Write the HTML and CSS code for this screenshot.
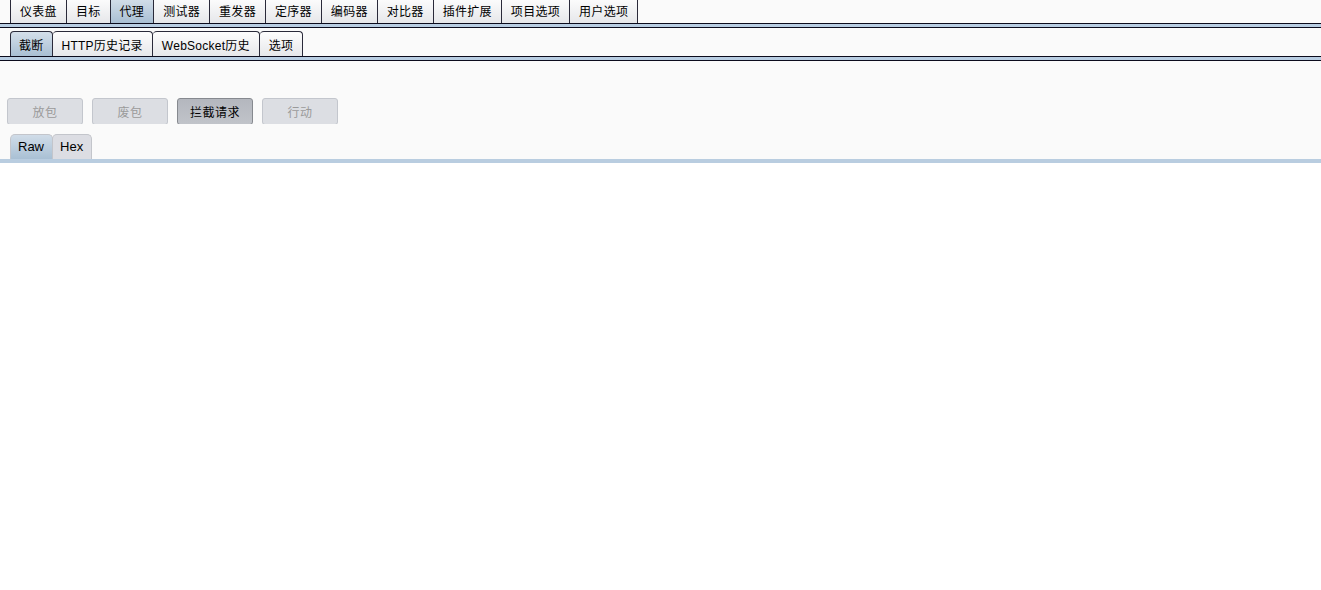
FILE: index.html
```html
<!DOCTYPE html>
<html lang="zh-CN">
<head>
<meta charset="utf-8">
<title>Proxy - Intercept</title>
<link rel="stylesheet" href="styles.css">
</head>
<body>
<div class="app">
  <div class="tabrow main-tabs">
    <div class="tab">仪表盘</div>
    <div class="tab">目标</div>
    <div class="tab active">代理</div>
    <div class="tab">测试器</div>
    <div class="tab">重发器</div>
    <div class="tab">定序器</div>
    <div class="tab">编码器</div>
    <div class="tab">对比器</div>
    <div class="tab">插件扩展</div>
    <div class="tab">项目选项</div>
    <div class="tab">用户选项</div>
  </div>
  <div class="sep"></div>
  <div class="tabrow sub-tabs">
    <div class="tab active">截断</div>
    <div class="tab">HTTP历史记录</div>
    <div class="tab">WebSocket历史</div>
    <div class="tab">选项</div>
  </div>
  <div class="sep"></div>
  <div class="intercept">
    <div class="buttons">
      <button class="btn" disabled>放包</button>
      <button class="btn" disabled>废包</button>
      <button class="btn pressed">拦截请求</button>
      <button class="btn" disabled>行动</button>
    </div>
    <div class="tabrow view-tabs">
      <div class="tab active">Raw</div>
      <div class="tab">Hex</div>
    </div>
    <div class="view-line"></div>
    <div class="editor"></div>
  </div>
</div>
</body>
</html>
```

FILE: styles.css
```css
html, body {
  margin: 0;
  padding: 0;
  height: 100%;
}
body {
  background: #ffffff;
  font-family: "Liberation Sans", "Noto Sans CJK SC", sans-serif;
  font-size: 12px;
  color: #000;
}
.app {
  display: flex;
  flex-direction: column;
  height: 100%;
}
.tabrow {
  display: flex;
  align-items: flex-end;
  background: #fafafa;
}
.main-tabs {
  height: 23px;
  padding-left: 10px;
}
.main-tabs .tab {
  height: 26px;
  margin-top: -4px;
  box-sizing: border-box;
  padding: 3px 9px 0 9px;
  display: flex;
  align-items: center;
  letter-spacing: 0.3px;
  border: 1px solid #2a2a3a;
  border-bottom: none;
  border-left: none;
  background: linear-gradient(#fdfdfd, #e6e7ea);
  line-height: 1;
}
.main-tabs .tab:first-child {
  border-left: 1px solid #2a2a3a;
}
.main-tabs .tab.active {
  background: linear-gradient(#d4dfea, #a9bfd3);
}
.sep {
  height: 3px;
  border-top: 1px solid #0b0b1c;
  border-bottom: 1px solid #0b0b1c;
  background: #b8cde2;
}
.sub-tabs {
  height: 28px;
  padding-left: 10px;
}
.sub-tabs .tab {
  height: 25px;
  box-sizing: border-box;
  padding: 0 9px;
  display: flex;
  align-items: center;
  letter-spacing: 0.25px;
  border: 1px solid #2a2a3a;
  border-bottom: none;
  border-left: none;
  border-radius: 4px 4px 0 0;
  background: linear-gradient(#fdfdfd, #e6e7ea);
}
.sub-tabs .tab:first-child {
  border-left: 1px solid #2a2a3a;
  padding: 0 8px;
}
.sub-tabs .tab.active {
  background: linear-gradient(#d4dfea, #a9bfd3);
}
.intercept {
  display: flex;
  flex-direction: column;
  flex: 1;
}
.buttons {
  background: #fafafa;
  display: flex;
  gap: 10px;
  padding: 37px 0 0 7px;
  height: 26px;
}
.btn {
  width: 76px;
  height: 27px;
  box-sizing: border-box;
  border: 1px solid #c3c6cd;
  border-radius: 3px;
  background: #dcdee3;
  color: #9a9a9a;
  font-family: "Liberation Sans", "Noto Sans CJK SC", sans-serif;
  font-size: 12px;
  letter-spacing: 0.5px;
  padding: 0;
}
.btn + .btn {
  margin-left: -1px;
}
.btn.pressed {
  background: linear-gradient(#b4b7be, #c0c3c9);
  border-color: #86898f;
  color: #000;
}
.view-tabs {
  height: 35px;
  padding-left: 10px;
}
.view-tabs .tab {
  height: 25px;
  box-sizing: border-box;
  padding: 0 8px 1px 7px;
  display: flex;
  align-items: center;
  font-size: 13px;
  border: 1px solid #c3c5cb;
  border-bottom: none;
  border-radius: 5px 5px 0 0;
  background: #dcdde3;
}
.view-tabs .tab + .tab {
  margin-left: -1px;
}
.view-tabs .tab.active {
  background: linear-gradient(#d0dce8, #a9c0d4);
  position: relative;
  z-index: 1;
}
.view-line {
  height: 4px;
  background: #b9cde0;
}
.editor {
  flex: 1;
  background: #ffffff;
}
```
